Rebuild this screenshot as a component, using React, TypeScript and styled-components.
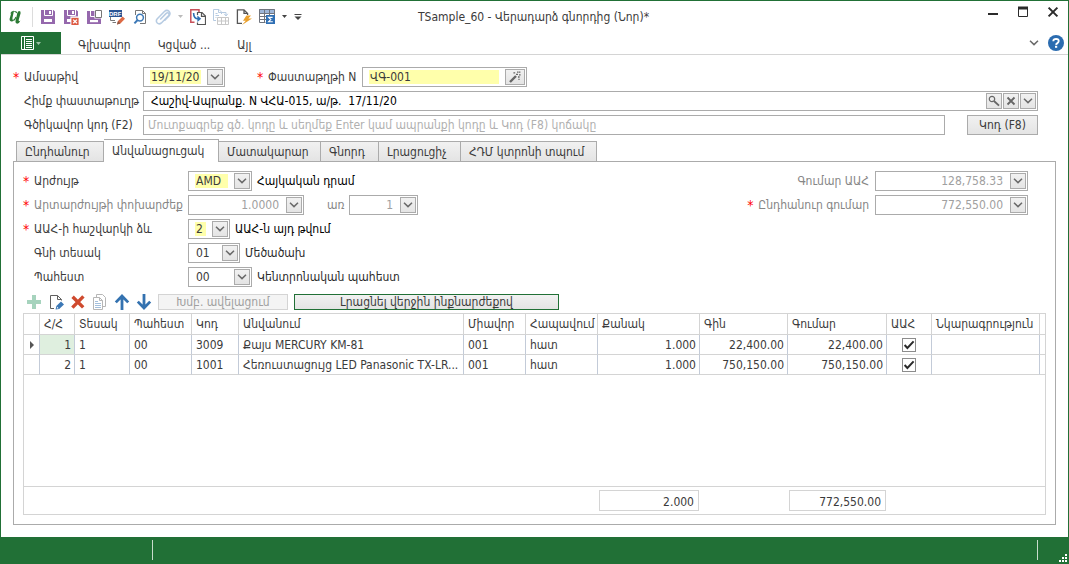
import React from "react";
import styled, { createGlobalStyle, css } from "styled-components";

const GREEN = "#217036";
const LINE = "#ababab";
const GRID = "#d4d4d4";
const TEXT = "#3b3b3b";
const MUTED = "#a0a0a0";

const GlobalStyle = createGlobalStyle`
  *, *::before, *::after { box-sizing: border-box; }
  body {
    margin: 0;
    background: #fff;
    color: ${TEXT};
    font-family: "DejaVu Sans Condensed", "DejaVu Sans", Tahoma, sans-serif;
    font-size: 12px;
    line-height: 16px;
  }
  button, input, select { font: inherit; color: inherit; margin: 0; padding: 0; border: 0; background: none; border-radius: 0; }
  svg { display: block; flex: none; }
`;

const Window = styled.div`
  display: flex;
  flex-direction: column;
  min-height: 100vh;
  border: solid ${GREEN};
  border-width: 1px 1px 0;
`;

/* Title bar */

const TitleBar = styled.header`
  display: grid;
  grid-template-columns: 1fr auto 1fr;
  align-items: center;
  height: 31px;
  padding: 0 8px 0 6px;
`;

const QuickAccess = styled.div`
  display: flex;
  align-items: center;
  gap: 7px;
`;

const Divider = styled.span`
  width: 1px;
  height: 20px;
  background: #dcdcdc;
`;

const IconButton = styled.button`
  display: flex;
  align-items: center;
  justify-content: center;
  height: 16px;
`;

const WindowTitle = styled.h1`
  margin: 0;
  font-size: 12px;
  font-weight: normal;
  white-space: nowrap;
`;

const WindowButtons = styled.div`
  display: flex;
  justify-content: flex-end;
  align-self: start;
  gap: 16px;
  padding-top: 3px;
`;

/* Ribbon */

const Ribbon = styled.nav`
  display: flex;
  height: 23px;
  border-bottom: 1px solid ${GRID};
`;

const FileButton = styled.button`
  display: flex;
  align-items: center;
  justify-content: center;
  gap: 2px;
  width: 60px;
  height: 22px;
  background: ${GREEN};
`;

const RibbonTabs = styled.div`
  display: flex;
  gap: 27px;
  flex: 1;
  padding: 3px 17px 0;
`;

const RibbonTab = styled.button`
  height: 20px;
  white-space: nowrap;
`;

const RibbonTools = styled.div`
  display: flex;
  align-items: center;
  gap: 9px;
  padding-right: 4px;
`;

/* Document form */

const Main = styled.main`
  display: flex;
  flex-direction: column;
  flex: 1;
  padding: 12px;
`;

const HeaderForm = styled.div`
  display: grid;
  gap: 4px;
  padding-right: 18px;
  margin-bottom: 4px;
`;

const FormLine = styled.div`
  display: flex;
  align-items: center;
  height: 20px;
`;

const Label = styled.label<{ $width?: number; $required?: boolean; $muted?: boolean }>`
  flex: none;
  display: flex;
  width: ${(p) => (p.$width ? `${p.$width}px` : "auto")};
  white-space: nowrap;
  color: ${(p) => (p.$muted ? "#868686" : TEXT)};
  &::before {
    content: "${(p) => (p.$required ? "*" : "")}";
    flex: none;
    width: 11px;
    color: #f00;
    font-size: 14px;
  }
`;

const Editor = styled.div<{ $width?: number; $muted?: boolean }>`
  display: flex;
  align-items: center;
  gap: 1px;
  height: 20px;
  padding: 0 1px 0 6px;
  border: 1px solid ${LINE};
  ${(p) => (p.$width ? css`flex: none; width: ${p.$width}px;` : css`flex: 1;`)}
  color: ${(p) => (p.$muted ? MUTED : TEXT)};
`;

const valueStyle = css<{ $highlight?: boolean }>`
  flex: 1;
  min-width: 0;
  width: 0;
  height: 14px;
  line-height: 14px;
  padding: 0 1px;
  margin-right: 5px;
  appearance: none;
  outline: 0;
  background: ${(p) => (p.$highlight ? "#ffffab" : "transparent")};
  opacity: 1;
`;

const ValueInput = styled.input<{ $highlight?: boolean; $right?: boolean; $strong?: boolean }>`
  ${valueStyle}
  text-align: ${(p) => (p.$right ? "right" : "left")};
  ${(p) => p.$strong && css`color: #000;`}
`;

const ValueSelect = styled.select<{ $highlight?: boolean }>`
  ${valueStyle}
`;

const SearchInput = styled.input`
  flex: 1;
  height: 20px;
  padding: 0 4px;
  border: 1px solid ${LINE};
  outline: 0;
  &::placeholder { color: #b0b0b0; opacity: 1; }
`;

const editorButton = css`
  display: flex;
  align-items: center;
  justify-content: center;
  flex: none;
  height: 16px;
  border: 1px solid ${LINE};
  background: linear-gradient(#f1f1f1, #e4e4e4);
`;

const EditorButton = styled.button<{ $wide?: boolean }>`
  ${editorButton}
  width: ${(p) => (p.$wide ? 20 : 16)}px;
`;

const SelectArrow = styled.span`
  ${editorButton}
  width: 16px;
  pointer-events: none;
`;

const PushButton = styled.button<{ $width: number; $tone?: "accent" | "muted"; $small?: boolean }>`
  flex: none;
  width: ${(p) => p.$width}px;
  height: ${(p) => (p.$small ? 16 : 20)}px;
  line-height: 14px;
  border: 1px solid ${(p) => (p.$tone === "accent" ? GREEN : p.$tone === "muted" ? GRID : LINE)};
  background: ${(p) => (p.$tone === "muted" ? "#f4f4f4" : "linear-gradient(#f1f1f1, #e4e4e4)")};
  color: ${(p) => (p.$tone === "muted" ? MUTED : TEXT)};
  white-space: nowrap;
`;

const TabStrip = styled.div`
  display: flex;
  align-items: flex-end;
  height: 22px;
  padding-left: 3px;
`;

const Tab = styled.button<{ $width: number; $active?: boolean }>`
  width: ${(p) => p.$width}px;
  height: 20px;
  padding: 0 8px;
  border: solid ${LINE};
  border-width: 1px 1px 0 0;
  background: linear-gradient(#f1f1f1, #e4e4e4);
  text-align: left;
  white-space: nowrap;
  &:first-child { border-left-width: 1px; }
  ${(p) =>
    p.$active &&
    css`
      height: 23px;
      margin-bottom: -1px;
      background: #fff;
      z-index: 1;
    `}
`;

const TabPanel = styled.section`
  display: flex;
  flex-direction: column;
  flex: 1;
  padding: 9px;
  border: 1px solid ${LINE};
`;

const PanelForm = styled.div`
  display: flex;
  justify-content: space-between;
  padding-right: 18px;
`;

const FormColumn = styled.div<{ $end?: boolean }>`
  display: flex;
  flex-direction: column;
  align-items: ${(p) => (p.$end ? "flex-end" : "flex-start")};
  gap: 4px;
`;

const Description = styled.span<{ $strong?: boolean }>`
  padding-left: 5px;
  color: ${(p) => (p.$strong ? "#000" : "#2b2b2b")};
  white-space: nowrap;
`;

const Gap = styled.span<{ $size: number }>`
  flex: none;
  width: ${(p) => p.$size}px;
`;

const RowTools = styled.div`
  display: flex;
  align-items: center;
  gap: 6px;
  height: 16px;
  margin: 7px 0 3px;
  padding-left: 3px;
`;

/* Item grid */

const GridBox = styled.div`
  display: flex;
  flex-direction: column;
  justify-content: space-between;
  flex: 1;
  border: 1px solid ${GRID};
`;

const GridTable = styled.table`
  width: 100%;
  table-layout: fixed;
  border-collapse: separate;
  border-spacing: 0;
`;

const HeadCell = styled.th`
  height: 21px;
  padding: 0 0 0 4px;
  border: solid ${GRID};
  border-width: 0 1px 1px 0;
  font-weight: normal;
  text-align: left;
  white-space: nowrap;
  &:last-child { border-right: 0; }
`;

const Cell = styled.td<{ $right?: boolean; $focus?: boolean; $center?: boolean }>`
  height: 20px;
  padding: ${(p) => (p.$right ? "0 3px" : p.$center ? "0" : "0 0 0 4px")};
  border: solid ${GRID};
  border-width: 0 1px 1px 0;
  border-right-color: #c3cbd8;
  line-height: 14px;
  text-align: ${(p) => (p.$right ? "right" : p.$center ? "center" : "left")};
  ${(p) => p.$focus && css`background: #dfefdf;`}
  white-space: nowrap;
  &:last-child { border-right: 0; }
`;

const RowMarker = styled.svg`
  margin: 0 auto 0 2px;
`;

const CheckBox = styled.span`
  display: block;
  position: relative;
  width: 14px;
  height: 14px;
  margin: 0 auto;
  input {
    display: block;
    appearance: none;
    width: 14px;
    height: 14px;
    border: 1px solid #8c8c8c;
    background: #fff;
  }
  svg { position: absolute; inset: 0; pointer-events: none; }
`;

const SummaryRow = styled(GridTable)`
  border-top: 1px solid ${GRID};
  td { height: 27px; padding: 3px 1px; }
`;

const SummaryBox = styled.output`
  display: block;
  height: 21px;
  padding: 3px 4px 0;
  border: 1px solid ${GRID};
  text-align: right;
`;

/* Status bar */

const StatusBar = styled.footer`
  display: flex;
  align-items: center;
  justify-content: space-between;
  height: 27px;
  padding: 0 30px 2px 151px;
  background: ${GREEN};
  position: relative;
  > i { width: 1px; height: 20px; background: #c9dccd; }
  > svg { position: absolute; right: 1px; bottom: 2px; }
`;

/* Icons */

type Shape = { children: React.ReactNode; w?: number; h?: number; faded?: boolean };
const Svg = ({ children, w = 16, h = 16, faded }: Shape) => (
  <svg width={w} height={h} viewBox={`0 0 ${w} ${h}`} fill="none" opacity={faded ? 0.4 : 1} aria-hidden="true">
    {children}
  </svg>
);

const Caret = ({ color = "#444", w = 5 }: { color?: string; w?: number }) => (
  <Svg w={w} h={3}>
    <path d={`M0 0H${w}L${w / 2} 3Z`} fill={color} />
  </Svg>
);

const Chevron = () => (
  <Svg w={10} h={6}>
    <path d="M1 0.8L5 4.6L9 0.8" stroke="#6a6a6a" strokeWidth="1.5" />
  </Svg>
);

const LogoIcon = () => (
  <Svg w={18} h={18}>
    <path d="M3 5.4Q4.6 2.6 7 2.8L5.4 10.2Q5.2 12.6 7 12.6Q4.4 14.6 2.8 12.4Q2.2 11 3.4 8L4.2 5.2Z" fill="#2c7a34" />
    <path d="M6.4 3Q10.4 2.6 10.2 5.4L8.6 12.6Q8 15.4 10.2 15.8Q12 15.8 13.4 12.4Q11.8 13.6 11.6 12.2L13.6 5.2Q14 3 12 3Q10.8 3.2 10.2 5.4" fill="#2c7a34" />
    <path d="M6.4 12.4Q8 11.6 9 9" stroke="#2c7a34" strokeWidth="1.2" />
  </Svg>
);

const Floppy = () => (
  <>
    <path d="M1 1H13.4L15 2.6V15H1Z" fill="#9568ad" />
    <path d="M4.5 1V6.5H12.5V1" stroke="#fff" />
    <path d="M9 2H11V5H9Z" fill="#fff" />
    <path d="M4 10H12V13H4Z" fill="#fff" />
  </>
);

const SaveIcon = () => <Svg><Floppy /></Svg>;

const SaveCloseIcon = () => (
  <Svg>
    <Floppy />
    <path d="M7.4 7.4H16V16H7.4Z" fill="#fff" />
    <path d="M8.4 8.8H15.6V16H8.4Z" fill="#dd5a43" />
    <path d="M10.2 10.6L13.9 14.3M13.9 10.6L10.2 14.3" stroke="#fff" strokeWidth="1.3" />
  </Svg>
);

const SaveNewIcon = () => (
  <Svg>
    <path d="M1 2H8.4V9.6H15V15H1Z" fill="#9568ad" />
    <path d="M4.5 2V7.5H8.6" stroke="#fff" />
    <path d="M4 11H12V13.2H4Z" fill="#fff" />
    <path d="M9.5 1.5H15.5V8.5H9.5Z" fill="#fff" stroke="#777" />
  </Svg>
);

const BadgeText = styled.text`
  font: bold 6px "Liberation Sans", sans-serif;
  fill: #fff;
`;

const DraftIcon = () => (
  <Svg>
    <path d="M0 1H13V8H0Z" fill="#2a5494" />
    <BadgeText x="0" y="7">DRF</BadgeText>
    <path d="M1.5 8V11.5H6M3.5 13.5H7" stroke="#777" strokeWidth="1" />
    <path d="M8 15.5L9 12L13.6 7.4L16 9.8L11.4 14.4Z" fill="#dd6a45" />
    <path d="M8 15.5L9 12L11.4 14.4Z" fill="#8a5a4a" />
  </Svg>
);

const PreviewIcon = () => (
  <Svg>
    <path d="M3.5 6V1.5H10.5L13.5 4.5V14.5H8M10.5 1.5V4.5H13.5" stroke="#777" />
    <circle cx="8" cy="8.6" r="3.4" fill="#fff" stroke="#3c78b6" strokeWidth="1.5" />
    <path d="M5.6 11L2.4 14.4" stroke="#3c78b6" strokeWidth="2" />
  </Svg>
);

const ClipIcon = () => (
  <Svg faded>
    <path d="M5.2 10.6L11.2 4.4Q12.6 3.2 13.6 4.3Q14.6 5.4 13.4 6.7L6.4 13.9Q4.2 15.8 2.3 14Q0.4 12 2.3 9.8L9.4 2.5Q11.8 0.4 14 2.3Q16 4.6 14 7L9.6 11.4" stroke="#4a7fb8" strokeWidth="1.5" />
  </Svg>
);

const CopyRedIcon = () => (
  <Svg>
    <path d="M9 3V0.8H0.8V13.2H4.5" stroke="#c8505a" strokeWidth="1.5" />
    <path d="M7.5 6V3.5H12L15.5 7V15.5H7.5V13.4" stroke="#555" strokeWidth="1.2" />
    <path d="M11.5 3.5V7.4H15.5" stroke="#555" strokeWidth="1.2" />
    <path d="M3.6 4Q3.6 9.8 8.2 9.8" stroke="#2f6fb4" strokeWidth="1.6" />
    <path d="M7.4 6.6L11.2 9.8L7.4 13Z" fill="#2f6fb4" />
  </Svg>
);

const CopyTableIcon = () => (
  <Svg faded>
    <path d="M3 11.5H0.5V0.5H6L8.5 3V5M5.5 0.5V3.5H8.5" stroke="#4a7fb8" />
    <path d="M2.5 4.5H4.5M2.5 6.5H6M2.5 8.5H3.5" stroke="#4a7fb8" />
    <path d="M9 3.5H13V6.5M11.2 4.8L13 7L14.8 4.8" stroke="#4a7fb8" />
    <path d="M4.5 8.5H15.5V15.5H4.5ZM4.5 12H15.5M8.5 8.5V15.5M12.5 8.5V15.5" stroke="#777" />
  </Svg>
);

const DocBoltIcon = () => (
  <Svg>
    <path d="M6 14.4H1.4V0.8H8L11.6 4.4V6M8 0.8V4.4H11.6" stroke="#555" strokeWidth="1.3" />
    <path d="M10.4 6.4H15L12.4 9.6H16L6 16L9.8 11.8H7Z" fill="#eaa02c" />
  </Svg>
);

const TableSumIcon = () => (
  <Svg>
    <path d="M0 0H16V4H0Z" fill="#9db6d8" />
    <path d="M0.5 0.5H15.5V6M0.5 0.5V13.5H6.5M0.5 4.5H15.5M0.5 7.5H7M0.5 10.5H7M5.5 0.5V13.5M10.5 0.5V6" stroke="#70757e" />
    <path d="M7 6H16V15H7Z" fill="#2f6fb4" />
    <path d="M13.6 8.4H9.6L11.8 10.5L9.6 12.7H13.8" stroke="#fff" strokeWidth="1.1" />
  </Svg>
);

const CustomizeIcon = () => (
  <Svg w={8} h={6}>
    <path d="M0.5 0.5H7.5" stroke="#444" />
    <path d="M0.5 2.4H7.5L4 6Z" fill="#444" />
  </Svg>
);

const AddIcon = () => (
  <Svg>
    <path d="M6 1H10V6H15V10H10V15H6V10H1V6H6Z" fill="#a6d3bd" />
  </Svg>
);

const EditIcon = () => (
  <Svg>
    <path d="M6 14.5H2.5V1.5H9.5L13.5 5.5V6.5M9.5 1.5V5.5H13.5" stroke="#606060" />
    <path d="M7.6 15.6L8.4 12L13 7.4L16 10.4L11.2 15Z" fill="#3c78b6" />
    <path d="M8.8 14.6L9.2 12.8L10.6 14.2Z" fill="#fff" />
  </Svg>
);

const DeleteIcon = () => (
  <Svg>
    <path d="M2.6 2.8L13.2 13.4M13.4 2.4L2.4 13.6" stroke="#cf4a2e" strokeWidth="3.4" />
  </Svg>
);

const DuplicateIcon = () => (
  <Svg>
    <path d="M4.5 3V0.5H10.5L13.5 3.5V12.5H11" stroke="#b6b6b6" />
    <path d="M1.5 3.5H7.5L10.5 6.5V15.5H1.5ZM7.5 3.5V6.5H10.5" fill="#fff" stroke="#b6b6b6" />
    <path d="M3 7.5H6M3 9.5H9M3 11.5H9M3 13.5H9" stroke="#a3bfdc" />
  </Svg>
);

const UpIcon = () => (
  <Svg>
    <path d="M8 16V3M1.8 8.4L8 2L14.2 8.4" stroke="#3472b0" strokeWidth="2.8" />
  </Svg>
);

const DownIcon = () => (
  <Svg>
    <path d="M8 0V13M1.8 7.6L8 14L14.2 7.6" stroke="#3472b0" strokeWidth="2.8" />
  </Svg>
);

const MenuIcon = () => (
  <Svg w={13} h={14}>
    <path d="M0.5 0.5H12.5V13.5H0.5Z" stroke="#fff" />
    <path d="M3.5 0.5V13.5M5 3.5H11M5 5.5H11M5 7.5H11M5 9.5H11M5 11.5H11" stroke="#fff" />
  </Svg>
);

const WandIcon = () => (
  <Svg w={12} h={12}>
    <path d="M1 11L7 5" stroke="#666" strokeWidth="2.4" />
    <path d="M4.4 1.8H6.2M8 1.2H9.6M10 1.2H11.4M7 3.4H9M10 3.8H11.6M9 6H10.6M9.4 8.4H10.6" stroke="#666" strokeWidth="1.3" />
  </Svg>
);

const SearchIcon = () => (
  <Svg w={12} h={12}>
    <circle cx="4" cy="4" r="2.7" stroke="#666" strokeWidth="1.2" />
    <path d="M6 6L11 10.6" stroke="#666" strokeWidth="1.8" />
  </Svg>
);

const ClearIcon = () => (
  <Svg w={10} h={10}>
    <path d="M1.5 1.5L8.5 8.5M8.5 1.5L1.5 8.5" stroke="#666" strokeWidth="1.8" />
  </Svg>
);

const HelpIcon = () => (
  <Svg>
    <circle cx="8" cy="8" r="8" fill="#2b6cb0" />
    <path d="M5.3 6.2Q5.4 3.9 8.1 3.9Q10.7 4 10.7 6.1Q10.7 7.3 9.4 8.1Q8.2 8.8 8.1 9.8" stroke="#fff" strokeWidth="1.9" />
    <path d="M7 10.8H9.2V12.8H7Z" fill="#fff" />
  </Svg>
);

const quickTools: { name: string; icon: React.ReactNode }[] = [
  { name: "Save", icon: <SaveIcon /> },
  { name: "Save and close", icon: <SaveCloseIcon /> },
  { name: "Save and new", icon: <SaveNewIcon /> },
  { name: "Draft", icon: <DraftIcon /> },
  { name: "Preview", icon: <PreviewIcon /> },
  { name: "Attach", icon: <ClipIcon /> },
  { name: "Attach options", icon: <Caret color="#bbb" /> },
  { name: "Create from", icon: <CopyRedIcon /> },
  { name: "Copy table", icon: <CopyTableIcon /> },
  { name: "Quick action", icon: <DocBoltIcon /> },
  { name: "Totals", icon: <TableSumIcon /> },
  { name: "Totals options", icon: <Caret /> },
  { name: "Customize", icon: <CustomizeIcon /> },
];

const rowTools: { name: string; icon: React.ReactNode }[] = [
  { name: "Add", icon: <AddIcon /> },
  { name: "Edit", icon: <EditIcon /> },
  { name: "Delete", icon: <DeleteIcon /> },
  { name: "Duplicate", icon: <DuplicateIcon /> },
  { name: "Up", icon: <UpIcon /> },
  { name: "Down", icon: <DownIcon /> },
];

const tabs = [
  { label: "Ընդհանուր", width: 88 },
  { label: "Անվանացուցակ", width: 115 },
  { label: "Մատակարար", width: 102 },
  { label: "Գնորդ", width: 58 },
  { label: "Լրացուցիչ", width: 82 },
  { label: "ՀԴՄ կտրոնի տպում", width: 136 },
];

const columns = [
  { title: "", width: 16 },
  { title: "Հ/Հ", width: 35 },
  { title: "Տեսակ", width: 55 },
  { title: "Պահեստ", width: 62 },
  { title: "Կոդ", width: 47 },
  { title: "Անվանում", width: 225 },
  { title: "Միավոր", width: 62 },
  { title: "Հապավում", width: 72 },
  { title: "Քանակ", width: 102 },
  { title: "Գին", width: 88 },
  { title: "Գումար", width: 99 },
  { title: "ԱԱՀ", width: 45 },
  { title: "Նկարագրություն", width: 108 },
];

const items = [
  { type: "1", store: "00", code: "3009", name: "Քայս MERCURY KM-81", unit: "001", abbr: "հատ", qty: "1.000", price: "22,400.00", sum: "22,400.00" },
  { type: "1", store: "00", code: "1001", name: "Հեռուստացույց LED Panasonic TX-LR...", unit: "001", abbr: "հատ", qty: "1.000", price: "750,150.00", sum: "750,150.00" },
];

const Columns = () => (
  <colgroup>
    {columns.map((c, i) => <col key={i} width={c.width} />)}
    <col />
  </colgroup>
);

type FieldProps = { id: string; value: string; width?: number; highlight?: boolean; right?: boolean; muted?: boolean };

const Lookup = ({ id, value, width, highlight }: FieldProps) => (
  <Editor $width={width}>
    <ValueSelect id={id} $highlight={highlight} defaultValue={value}>
      <option>{value}</option>
    </ValueSelect>
    <SelectArrow><Chevron /></SelectArrow>
  </Editor>
);

const PopupField = ({ id, value, width, highlight, right, muted }: FieldProps) => (
  <Editor $width={width} $muted={muted}>
    <ValueInput id={id} $highlight={highlight} $right={right} defaultValue={value} readOnly={muted} />
    <EditorButton aria-label="Open"><Chevron /></EditorButton>
  </Editor>
);

export default function App() {
  return (
    <Window>
      <GlobalStyle />
      <TitleBar>
        <QuickAccess>
          <LogoIcon />
          <Divider />
          {quickTools.map((t) => (
            <IconButton key={t.name} aria-label={t.name}>{t.icon}</IconButton>
          ))}
        </QuickAccess>
        <WindowTitle>TSample_60 - Վերադարձ գնորդից (Նոր)*</WindowTitle>
        <WindowButtons>
          <IconButton aria-label="Minimize">
            <Svg w={14} h={14}><path d="M2 9H12" stroke="#2b2b2b" strokeWidth="2" /></Svg>
          </IconButton>
          <IconButton aria-label="Maximize">
            <Svg w={14} h={14}>
              <path d="M2.5 2.5H11.5V11.5H2.5Z" stroke="#2b2b2b" />
              <path d="M2 3H12" stroke="#2b2b2b" strokeWidth="3" />
            </Svg>
          </IconButton>
          <IconButton aria-label="Close">
            <Svg w={14} h={14}><path d="M2.6 2.6L11.4 11.4M11.4 2.6L2.6 11.4" stroke="#2b2b2b" strokeWidth="2" /></Svg>
          </IconButton>
        </WindowButtons>
      </TitleBar>
      <Ribbon>
        <FileButton aria-label="File"><MenuIcon /><Caret color="#9cc3a6" /></FileButton>
        <RibbonTabs>
          <RibbonTab>Գլխավոր</RibbonTab>
          <RibbonTab>Կցված ...</RibbonTab>
          <RibbonTab>Այլ</RibbonTab>
        </RibbonTabs>
        <RibbonTools>
          <IconButton aria-label="Collapse"><Chevron /></IconButton>
          <IconButton aria-label="Help"><HelpIcon /></IconButton>
        </RibbonTools>
      </Ribbon>

      <Main>
        <HeaderForm>
          <FormLine>
            <Label htmlFor="date" $width={130} $required>Ամսաթիվ</Label>
            <PopupField id="date" value="19/11/20" width={82} highlight />
            <Gap $size={32} />
            <Label htmlFor="number" $width={105} $required>Փաստաթղթի N</Label>
            <Editor $width={165}>
              <ValueInput id="number" $highlight defaultValue="ՎԳ-001" />
              <EditorButton $wide aria-label="Generate"><WandIcon /></EditorButton>
            </Editor>
          </FormLine>
          <FormLine>
            <Label htmlFor="basis" $width={130}>Հիմք փաստաթուղթ</Label>
            <Editor>
              <ValueInput id="basis" $strong defaultValue="Հաշիվ-Ապրանք. N ՎՀԱ-015, ա/թ.  17/11/20" />
              <EditorButton aria-label="Find"><SearchIcon /></EditorButton>
              <EditorButton aria-label="Clear"><ClearIcon /></EditorButton>
              <EditorButton aria-label="Open"><Chevron /></EditorButton>
            </Editor>
          </FormLine>
          <FormLine>
            <Label htmlFor="barcode" $width={130}>Գծիկավոր կոդ (F2)</Label>
            <SearchInput id="barcode" placeholder="Մուտքագրեք գծ. կոդը և սեղմեք Enter կամ ապրանքի կոդը և Կոդ (F8) կոճակը" />
            <Gap $size={22} />
            <PushButton $width={71}>Կոդ (F8)</PushButton>
          </FormLine>
        </HeaderForm>

        <TabStrip role="tablist">
          {tabs.map((t, i) => (
            <Tab key={t.label} role="tab" aria-selected={i === 1} $active={i === 1} $width={t.width}>{t.label}</Tab>
          ))}
        </TabStrip>
        <TabPanel>
          <PanelForm>
            <FormColumn>
              <FormLine>
                <Label htmlFor="currency" $width={165} $required>Արժույթ</Label>
                <Lookup id="currency" value="AMD" width={64} highlight />
                <Description $strong>Հայկական դրամ</Description>
              </FormLine>
              <FormLine>
                <Label htmlFor="rate" $width={165} $required $muted>Արտարժույթի փոխարժեք</Label>
                <PopupField id="rate" value="1.0000" width={116} right muted />
                <Gap $size={12} />
                <Label htmlFor="per" $width={33} $muted>առ</Label>
                <PopupField id="per" value="1" width={69} right muted />
              </FormLine>
              <FormLine>
                <Label htmlFor="vat" $width={165} $required>ԱԱՀ-ի հաշվարկի ձև</Label>
                <Lookup id="vat" value="2" width={42} highlight />
                <Description $strong>ԱԱՀ-ն այդ թվում</Description>
              </FormLine>
              <FormLine>
                <Label htmlFor="price" $width={165}>Գնի տեսակ</Label>
                <Lookup id="price" value="01" width={52} />
                <Description>Մեծածախ</Description>
              </FormLine>
              <FormLine>
                <Label htmlFor="store" $width={165}>Պահեստ</Label>
                <Lookup id="store" value="00" width={64} />
                <Description>Կենտրոնական պահեստ</Description>
              </FormLine>
            </FormColumn>
            <FormColumn $end>
              <FormLine>
                <Label htmlFor="vatsum" $muted>Գումար ԱԱՀ</Label>
                <Gap $size={6} />
                <PopupField id="vatsum" value="128,758.33" width={153} right muted />
              </FormLine>
              <FormLine>
                <Label htmlFor="total" $required $muted>Ընդհանուր գումար</Label>
                <Gap $size={6} />
                <PopupField id="total" value="772,550.00" width={153} right muted />
              </FormLine>
            </FormColumn>
          </PanelForm>

          <RowTools>
            {rowTools.map((t) => (
              <IconButton key={t.name} aria-label={t.name}>{t.icon}</IconButton>
            ))}
            <PushButton $width={130} $tone="muted" $small disabled>Խմբ. ավելացում</PushButton>
            <PushButton $width={265} $tone="accent" $small>Լրացնել վերջին ինքնարժեքով</PushButton>
          </RowTools>

          <GridBox>
            <GridTable>
              <Columns />
              <thead>
                <tr>
                  {columns.map((c, i) => <HeadCell key={i}>{c.title}</HeadCell>)}
                  <HeadCell />
                </tr>
              </thead>
              <tbody>
                {items.map((it, i) => (
                  <tr key={it.code}>
                    <Cell>
                      {i === 0 && (
                        <RowMarker width="4" height="8" viewBox="0 0 4 8"><path d="M0 0L4 4L0 8Z" fill="#555" /></RowMarker>
                      )}
                    </Cell>
                    <Cell $right $focus={i === 0}>{i + 1}</Cell>
                    <Cell>{it.type}</Cell>
                    <Cell>{it.store}</Cell>
                    <Cell>{it.code}</Cell>
                    <Cell>{it.name}</Cell>
                    <Cell>{it.unit}</Cell>
                    <Cell>{it.abbr}</Cell>
                    <Cell $right>{it.qty}</Cell>
                    <Cell $right>{it.price}</Cell>
                    <Cell $right>{it.sum}</Cell>
                    <Cell $center>
                      <CheckBox>
                        <input type="checkbox" defaultChecked aria-label="ԱԱՀ" />
                        <Svg w={14} h={14}><path d="M2.6 7L5.4 10L11.6 3.4" stroke="#2b2b2b" strokeWidth="2" /></Svg>
                      </CheckBox>
                    </Cell>
                    <Cell />
                    <Cell />
                  </tr>
                ))}
              </tbody>
            </GridTable>
            <SummaryRow>
              <Columns />
              <tbody>
                <tr>
                  <td colSpan={8} />
                  <td><SummaryBox>2.000</SummaryBox></td>
                  <td />
                  <td><SummaryBox>772,550.00</SummaryBox></td>
                  <td colSpan={3} />
                </tr>
              </tbody>
            </SummaryRow>
          </GridBox>
        </TabPanel>
      </Main>

      <StatusBar>
        <i />
        <i />
        <Svg w={8} h={8}>
          <path d="M6 0H8V2H6ZM3 3H5V5H3ZM6 3H8V5H6ZM0 6H2V8H0ZM3 6H5V8H3ZM6 6H8V8H6Z" fill="#fff" />
        </Svg>
      </StatusBar>
    </Window>
  );
}
